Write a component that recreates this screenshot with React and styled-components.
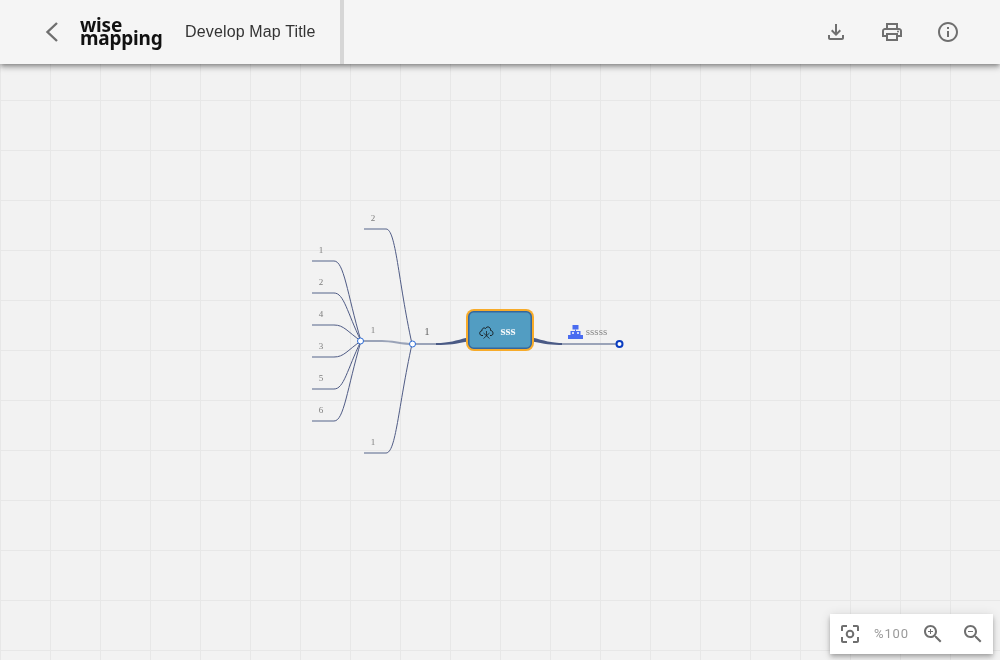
import React from 'react'
import styled, { createGlobalStyle } from 'styled-components'

const GlobalStyle = createGlobalStyle`
    html, body {
        margin: 0;
        height: 100%;
        overflow: hidden;
    }
    #root {
        height: 100%;
    }
`

const Page = styled.div`
    height: 660px;
    display: flex;
    flex-direction: column;
    font-family: Roboto, "Liberation Sans", sans-serif;
    will-change: transform;
`

const AppBar = styled.header`
    height: 64px;
    flex-shrink: 0;
    display: flex;
    align-items: center;
    background-color: #f5f5f5;
    box-shadow: 0 2px 4px -1px rgba(0, 0, 0, 0.3), 0 4px 5px 0 rgba(0, 0, 0, 0.17), 0 1px 10px 0 rgba(0, 0, 0, 0.14);
    position: relative;
    z-index: 2;
`

const LeftGroup = styled.div`
    width: 340px;
    height: 100%;
    display: flex;
    align-items: center;
    border-right: 4px solid #d6d6d6;
`

const BackButton = styled.button`
    width: 24px;
    height: 24px;
    margin-left: 40px;
    padding: 0;
    border: none;
    background: none;
    color: #6f6f6f;
    display: flex;
`

const Logo = styled.div`
    margin-left: 16px;
    padding-bottom: 1px;
    width: 84px;
    font-family: "Noto Sans", sans-serif;
    font-weight: 700;
    font-size: 19px;
    line-height: 13px;
    letter-spacing: -0.2px;
    color: #111;
`

const LogoLine = styled.div`
    white-space: nowrap;
`

const MapTitle = styled.div`
    margin-left: 21px;
    font-family: "Liberation Sans", sans-serif;
    font-size: 16px;
    letter-spacing: 0.15px;
    color: #333;
    white-space: nowrap;
`

const RightGroup = styled.div`
    margin-left: auto;
    padding-right: 24px;
    display: flex;
`

const ToolButton = styled.button`
    width: 56px;
    height: 48px;
    padding: 0;
    border: none;
    background: none;
    color: #6f6f6f;
    display: flex;
    align-items: center;
    justify-content: center;
`

const Canvas = styled.main`
    flex: 1;
    position: relative;
    overflow: hidden;
    background-color: #f2f2f2;
    background-image:
        linear-gradient(to right, #e7e7e7 1px, transparent 1px),
        linear-gradient(to bottom, #e7e7e7 1px, transparent 1px);
    background-size: 50px 50px;
    background-position: 0 36px;
`

const MapDrawing = styled.svg`
    position: absolute;
    top: 0;
    left: 0;
    display: block;
`

const ZoomPanel = styled.div`
    position: absolute;
    left: 830px;
    top: 550px;
    width: 163px;
    height: 40px;
    display: flex;
    align-items: center;
    background-color: #fff;
    box-shadow: 0 2px 4px -1px rgba(0, 0, 0, 0.2), 0 4px 5px 0 rgba(0, 0, 0, 0.14), 0 1px 10px 0 rgba(0, 0, 0, 0.12);
`

const ZoomButton = styled.button`
    width: 40px;
    height: 40px;
    flex-shrink: 0;
    padding: 0;
    border: none;
    background: none;
    color: #6f6f6f;
    display: flex;
    align-items: center;
    justify-content: center;
`

const ZoomValue = styled.span`
    width: 43px;
    padding-bottom: 2px;
    text-align: center;
    font-size: 13px;
    letter-spacing: 0.9px;
    color: #9a9a9a;
`

const Icon = ({ d, children, size = 24 }) => (
  <svg width={size} height={size} viewBox="0 0 24 24" fill="currentColor">
    {d && <path d={d} />}
    {children}
  </svg>
)

const LENS = 'M15.5 14h-.79l-.28-.27C15.41 12.59 16 11.11 16 9.5 16 5.91 13.09 3 9.5 3S3 5.91 3 9.5 5.91 16 9.5 16c1.61 0 3.09-.59 4.23-1.57l.27.28v.79l5 4.99L20.49 19l-4.99-5zm-6 0C7.01 14 5 11.99 5 9.5S7.01 5 9.5 5 14 7.01 14 9.5 11.99 14 9.5 14z'

const leaves = [
  { y: 261, label: '1' },
  { y: 293, label: '2' },
  { y: 325, label: '4' },
  { y: 357, label: '3' },
  { y: 389, label: '5' },
  { y: 421, label: '6' },
]

const LINE = '#9aa3b8'
const CURVE = '#4f5b85'
const NODE = '#2b6bd6'
const ICON_BLUE = '#4a6cf0'

const MapLabel = styled.text`
    font-family: "Liberation Serif", serif;
    font-size: ${props => props.$size || 9}px;
    font-weight: ${props => props.$bold ? 700 : 400};
    fill: ${props => props.$color || '#7d7d7d'};
    text-anchor: middle;
`

function MindMap() {
  return (
    <MapDrawing width="1000" height="596" viewBox="0 64 1000 596" fill="none">
      {leaves.map(leaf => (
        <g key={leaf.y}>
          <path d={`M312 ${leaf.y}H334`} stroke={LINE} strokeWidth="1.8" />
          <path d={`M334 ${leaf.y}C344 ${leaf.y} 347 ${leaf.y + (341 - leaf.y) * 0.4} 361 341`} stroke={CURVE} />
          <MapLabel x="321" y={leaf.y - 8}>{leaf.label}</MapLabel>
        </g>
      ))}

      <path d="M364 229H386" stroke={LINE} strokeWidth="1.8" />
      <path d="M386 229C396 229 398 280 412 344" stroke={CURVE} />
      <MapLabel x="373" y="221">2</MapLabel>

      <path d="M364 453H386" stroke={LINE} strokeWidth="1.8" />
      <path d="M386 453C396 453 398 408 412 344" stroke={CURVE} />
      <MapLabel x="373" y="445">1</MapLabel>

      <path d="M361 341H382C392 341 402 344 412 344" stroke={LINE} strokeWidth="1.8" />
      <MapLabel x="373" y="333">1</MapLabel>

      <path d="M412 344H438" stroke={LINE} strokeWidth="2" />
      <MapLabel x="427" y="335" $size={11} $color="#666">1</MapLabel>
      <path d="M436 343C450 343 455 340.5 468 337.5V341.5C455 344 450 345 436 345Z" fill="#4a5a85" />

      <path d="M532 337.5C545 340.5 550 343 564 343V345C550 345 545 344 532 341.5Z" fill="#4a5a85" />
      <path d="M562 344H618" stroke={LINE} strokeWidth="2" />

      <circle cx="360.5" cy="341" r="3" fill="#fff" stroke={NODE} />
      <circle cx="412.5" cy="344" r="3" fill="#fff" stroke={NODE} />
      <circle cx="619.5" cy="344" r="3" fill="#fff" stroke="#0a3cc0" strokeWidth="2" />

      <rect x="466" y="309" width="68" height="42" rx="8" fill="#f7ab2a" />
      <rect x="468.75" y="311.75" width="62.5" height="36.5" rx="5" fill="#529dc2" stroke="#35679c" strokeWidth="1.5" />
      <path d="M483 335.5H482C479 335.5 479 331 482 330.7C481.8 328 484.5 327.3 485.5 328.6C487 325.5 491 327 490.5 330.4C493.6 330.6 493.8 335.5 491 335.5H490" stroke="#111" strokeWidth="0.9" />
      <path d="M486.5 331V335.5M483.5 333L489.5 338.5M489.5 333L483.5 338.5" stroke="#111" strokeWidth="0.7" />
      <MapLabel x="508" y="335" $size={13} $bold $color="#f2f6f8">sss</MapLabel>

      <path d="M572.5 325H578.5V329.5H572.5Z" fill={ICON_BLUE} />
      <path d="M575.5 329.5V331" stroke={ICON_BLUE} />
      <path d="M570.5 331H580.5V335H570.5Z" fill={ICON_BLUE} />
      <path d="M572 332H574V334H572ZM577 332H579V334H577Z" fill="#cfd8fb" />
      <path d="M568 335H583V339H568Z" fill={ICON_BLUE} />
      <MapLabel x="596.5" y="335" $size={11} $color="#8a8a8a">sssss</MapLabel>
    </MapDrawing>
  )
}

export default function App() {
  return (
    <Page>
      <GlobalStyle />
      <AppBar>
        <LeftGroup>
          <BackButton>
            <svg width="24" height="24" viewBox="0 0 24 24" fill="none" stroke="currentColor" strokeWidth="2.4">
              <path d="M17 3L7.5 12L17 21" />
            </svg>
          </BackButton>
          <Logo>
            <LogoLine>wise</LogoLine>
            <LogoLine>mapping</LogoLine>
          </Logo>
          <MapTitle>Develop Map Title</MapTitle>
        </LeftGroup>
        <RightGroup>
          <ToolButton>
            <Icon d="M18 15v3H6v-3H4v3c0 1.1.9 2 2 2h12c1.1 0 2-.9 2-2v-3h-2zm-1-4l-1.41-1.41L13 12.17V4h-2v8.17L8.41 9.59 7 11l5 5 5-5z" />
          </ToolButton>
          <ToolButton>
            <Icon d="M19 8h-1V3H6v5H5c-1.66 0-3 1.34-3 3v6h4v4h12v-4h4v-6c0-1.66-1.34-3-3-3zM8 5h8v3H8V5zm8 12v2H8v-4h8v2zm2-2v-2H6v2H4v-4c0-.55.45-1 1-1h14c.55 0 1 .45 1 1v4h-2z">
              <circle cx="18" cy="11.5" r="1" />
            </Icon>
          </ToolButton>
          <ToolButton>
            <Icon d="M11 7h2v2h-2zm0 4h2v6h-2zm1-9C6.48 2 2 6.48 2 12s4.48 10 10 10 10-4.48 10-10S17.52 2 12 2zm0 18c-4.41 0-8-3.59-8-8s3.59-8 8-8 8 3.59 8 8-3.59 8-8 8z" />
          </ToolButton>
        </RightGroup>
      </AppBar>
      <Canvas>
        <MindMap />
        <ZoomPanel>
          <ZoomButton>
            <Icon d="M5 15H3v4c0 1.1.9 2 2 2h4v-2H5v-4zM5 5h4V3H5c-1.1 0-2 .9-2 2v4h2V5zm14-2h-4v2h4v4h2V5c0-1.1-.9-2-2-2zm0 16h-4v2h4c1.1 0 2-.9 2-2v-4h-2v4z">
              <circle cx="12" cy="12" r="3.3" fill="none" stroke="currentColor" strokeWidth="2" />
            </Icon>
          </ZoomButton>
          <ZoomValue>%100</ZoomValue>
          <ZoomButton>
            <Icon d={LENS}>
              <path d="M12 10h-2v2H9v-2H7V9h2V7h1v2h2v1z" />
            </Icon>
          </ZoomButton>
          <ZoomButton>
            <Icon d={LENS}>
              <path d="M7 9h5v1H7z" />
            </Icon>
          </ZoomButton>
        </ZoomPanel>
      </Canvas>
    </Page>
  )
}
